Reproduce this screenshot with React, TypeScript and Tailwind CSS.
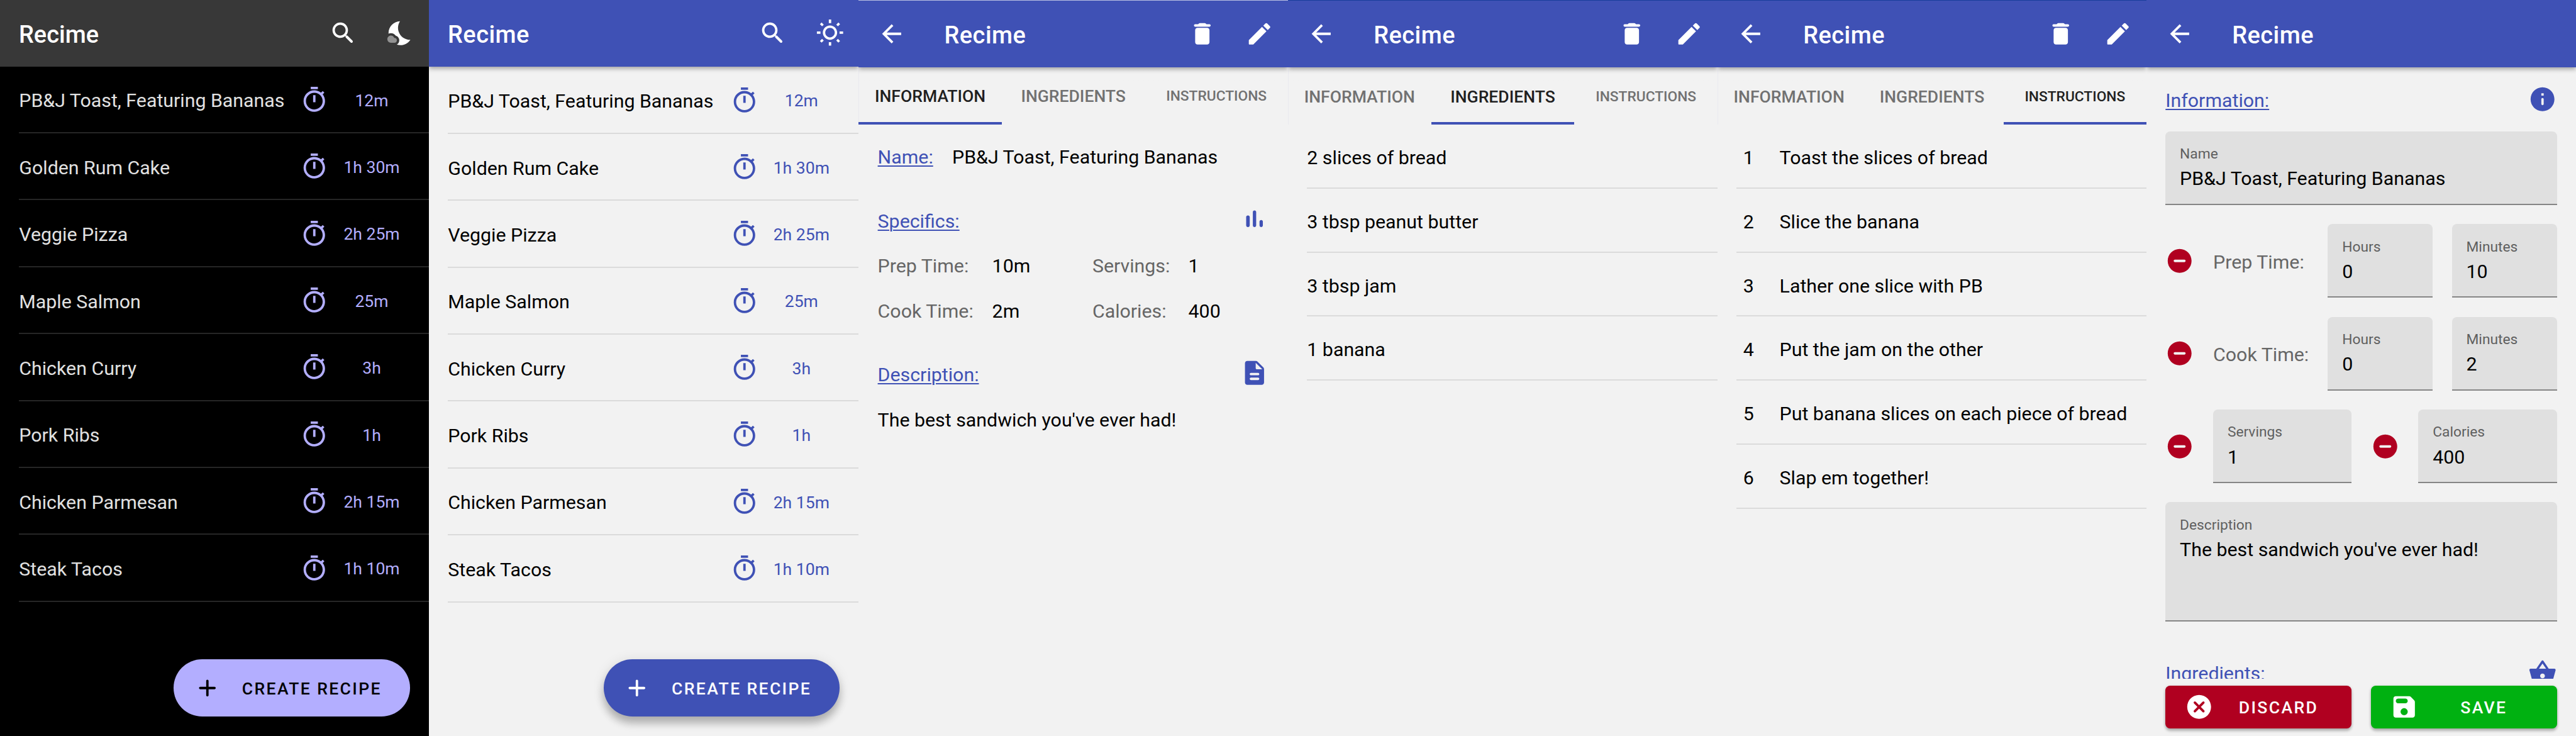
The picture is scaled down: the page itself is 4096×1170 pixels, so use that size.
import React from "react";

const ICONS = {
  search:
    "M15.5 14h-.79l-.28-.27c1.2-1.4 1.82-3.31 1.48-5.34-.47-2.78-2.79-5-5.59-5.34-4.23-.52-7.79 3.04-7.27 7.27.34 2.8 2.56 5.12 5.34 5.59 2.03.34 3.94-.28 5.34-1.48l.27.28v.79l4.25 4.25c.41.41 1.08.41 1.49 0 .41-.41.41-1.08 0-1.49L15.5 14zm-6 0C7.01 14 5 11.99 5 9.5S7.01 5 9.5 5 14 7.01 14 9.5 11.99 14 9.5 14z",
  sun: "M6.76 4.84l-1.8-1.79-1.41 1.41 1.79 1.79 1.42-1.41zM4 10.5H1v2h3v-2zm9-9.95h-2V3.5h2V.55zm7.45 3.91l-1.41-1.41-1.79 1.79 1.41 1.41 1.79-1.79zm-3.21 13.7l1.79 1.8 1.41-1.41-1.8-1.79-1.4 1.4zM20 10.5v2h3v-2h-3zm-8-5c-3.31 0-6 2.69-6 6s2.69 6 6 6 6-2.69 6-6-2.69-6-6-6zm0 10c-2.21 0-4-1.79-4-4s1.79-4 4-4 4 1.79 4 4-1.79 4-4 4zm-1 6.95h2V19.5h-2v2.95zm-7.45-3.91l1.41 1.41 1.79-1.8-1.41-1.41-1.79 1.8z",
  timer:
    "M15 1H9v2h6V1zm-4 13h2V8h-2v6zm8.03-6.61l1.42-1.42c-.43-.51-.9-.99-1.41-1.41l-1.42 1.42C16.07 4.74 14.12 4 12 4c-4.97 0-9 4.03-9 9s4.02 9 9 9 9-4.03 9-9c0-2.12-.74-4.07-1.97-5.61zM12 20c-3.87 0-7-3.13-7-7s3.13-7 7-7 7 3.13 7 7-3.13 7-7 7z",
  add: "M18 13h-5v5c0 .55-.45 1-1 1s-1-.45-1-1v-5H6c-.55 0-1-.45-1-1s.45-1 1-1h5V6c0-.55.45-1 1-1s1 .45 1 1v5h5c.55 0 1 .45 1 1s-.45 1-1 1z",
  back: "M20 11H7.83l5.59-5.59L12 4l-8 8 8 8 1.41-1.41L7.83 13H20v-2z",
  trash:
    "M6 19c0 1.1.9 2 2 2h8c1.1 0 2-.9 2-2V9c0-1.1-.9-2-2-2H8c-1.1 0-2 .9-2 2v10zM18 4h-2.5l-.71-.71c-.18-.18-.44-.29-.7-.29H9.91c-.26 0-.52.11-.7.29L8.5 4H6c-.55 0-1 .45-1 1s.45 1 1 1h12c.55 0 1-.45 1-1s-.45-1-1-1z",
  edit: "M3 17.46v3.04c0 .28.22.5.5.5h3.04c.13 0 .26-.05.35-.15L17.81 9.94l-3.75-3.75L3.15 17.1c-.1.1-.15.22-.15.36zM20.71 7.04c.39-.39.39-1.02 0-1.41l-2.34-2.34c-.39-.39-1.02-.39-1.41 0l-1.83 1.83 3.75 3.75 1.83-1.83z",
  chart:
    "M6.4 9.2h.2c.77 0 1.4.63 1.4 1.4v7c0 .77-.63 1.4-1.4 1.4h-.2c-.77 0-1.4-.63-1.4-1.4v-7c0-.77.63-1.4 1.4-1.4zM12 5c.77 0 1.4.63 1.4 1.4v11.2c0 .77-.63 1.4-1.4 1.4-.77 0-1.4-.63-1.4-1.4V6.4c0-.77.63-1.4 1.4-1.4zm5.6 8c.77 0 1.4.63 1.4 1.4v3.2c0 .77-.63 1.4-1.4 1.4-.77 0-1.4-.63-1.4-1.4v-3.2c0-.77.63-1.4 1.4-1.4z",
  document:
    "M14.59 2.59c-.38-.38-.89-.59-1.42-.59H6c-1.1 0-2 .9-2 2v16c0 1.1.89 2 1.99 2H18c1.1 0 2-.9 2-2V8.83c0-.53-.21-1.04-.59-1.41l-4.82-4.83zM15 18H9c-.55 0-1-.45-1-1s.45-1 1-1h6c.55 0 1 .45 1 1s-.45 1-1 1zm0-4H9c-.55 0-1-.45-1-1s.45-1 1-1h6c.55 0 1 .45 1 1s-.45 1-1 1zm-2-6V3.5L18.5 9H14c-.55 0-1-.45-1-1z",
  info: "M12 2C6.48 2 2 6.48 2 12s4.48 10 10 10 10-4.48 10-10S17.52 2 12 2zm0 15c-.55 0-1-.45-1-1v-4c0-.55.45-1 1-1s1 .45 1 1v4c0 .55-.45 1-1 1zm1-8h-2V7h2v2z",
  remove:
    "M12 2C6.48 2 2 6.48 2 12s4.48 10 10 10 10-4.48 10-10S17.52 2 12 2zm4 11H8c-.55 0-1-.45-1-1s.45-1 1-1h8c.55 0 1 .45 1 1s-.45 1-1 1z",
  basket:
    "M17.21 9l-4.38-6.56c-.19-.28-.51-.42-.83-.42-.32 0-.64.14-.83.43L6.79 9H2c-.55 0-1 .45-1 1 0 .09.01.18.04.27l2.54 9.27c.23.84 1 1.46 1.92 1.46h13c.92 0 1.69-.62 1.93-1.46l2.54-9.27L23 10c0-.55-.45-1-1-1h-4.79zM9 9l3-4.4L15 9H9zm3 8c-1.1 0-2-.9-2-2s.9-2 2-2 2 .9 2 2-.9 2-2 2z",
  cancel:
    "M12 2C6.47 2 2 6.47 2 12s4.47 10 10 10 10-4.47 10-10S17.53 2 12 2zm4.3 14.3c-.39.39-1.02.39-1.41 0L12 13.41 9.11 16.3c-.39.39-1.02.39-1.41 0-.39-.39-.39-1.02 0-1.41L10.59 12 7.7 9.11c-.39-.39-.39-1.02 0-1.41.39-.39 1.02-.39 1.41 0L12 10.59l2.89-2.89c.39-.39 1.02-.39 1.41 0 .39.39.39 1.02 0 1.41L13.41 12l2.89 2.89c.38.38.38 1.02 0 1.41z",
  save: "M17.59 3.59c-.38-.38-.89-.59-1.42-.59H5c-1.11 0-2 .9-2 2v14c0 1.1.9 2 2 2h14c1.1 0 2-.9 2-2V7.83c0-.53-.21-1.04-.59-1.41l-2.82-2.83zM12 19c-1.66 0-3-1.34-3-3s1.34-3 3-3 3 1.34 3 3-1.34 3-3 3zm1-10H7c-1.1 0-2-.9-2-2s.9-2 2-2h6c1.1 0 2 .9 2 2s-.9 2-2 2z",
};

type IconName = keyof typeof ICONS;

function Icon({ name, className = "" }: { name: IconName; className?: string }) {
  return (
    <svg viewBox="0 0 24 24" fill="currentColor" className={`size-[45.5px] shrink-0 ${className}`}>
      <path d={ICONS[name]} />
    </svg>
  );
}

function MoonIcon() {
  return (
    <svg viewBox="0 0 24 24" fill="currentColor" className="size-[45.5px] shrink-0">
      <path d="M11.1 12.08c-2.33-4.51-.5-8.48.53-10.07C6.27 2.2 1.98 6.59 1.98 12c0 .14.02.28.02.42.62-.27 1.29-.42 2-.42 1.66 0 3.18.83 4.1 2.15 1.67.48 2.9 2.02 2.9 3.85 0 1.52-.87 2.83-2.12 3.51.98.32 2.03.5 3.11.5 3.5 0 6.58-1.8 8.37-4.52-2.36.23-6.98-.97-9.26-5.41z" />
      <path fillOpacity=".45" d="M7 16h-.18C6.4 14.84 5.3 14 4 14c-1.66 0-3 1.34-3 3s1.34 3 3 3h3c1.1 0 2-.9 2-2s-.9-2-2-2z" />
    </svg>
  );
}

/* Body text: 16sp with the platform's extra top font padding. */
const BODY = "pt-[3px] text-[30.34px] leading-[37.3px] whitespace-nowrap";

function AppBar({
  back = false,
  dark = false,
  actions,
  className,
}: {
  back?: boolean;
  dark?: boolean;
  actions?: React.ReactNode;
  className: string;
}) {
  return (
    <header
      className={`relative z-10 flex shrink-0 items-center pl-[30px] pr-[22.8px] text-white ${className} ${
        dark ? "bg-[#383838]" : "bg-[#3f51b5] shadow-[0_3px_7px_rgba(0,0,0,0.34)]"
      }`}
    >
      {back && <Icon name="back" className="mr-[60.7px]" />}
      <h1
        className={`flex-1 pt-[4px] text-[37.93px] font-medium leading-[46px] ${dark ? "" : "tracking-[0.0125em]"}`}
      >
        Recime
      </h1>
      <div className="flex items-center gap-[45.5px]">{actions}</div>
    </header>
  );
}

const RECIPES: [string, string][] = [
  ["PB&J Toast, Featuring Bananas", "12m"],
  ["Golden Rum Cake", "1h 30m"],
  ["Veggie Pizza", "2h 25m"],
  ["Maple Salmon", "25m"],
  ["Chicken Curry", "3h"],
  ["Pork Ribs", "1h"],
  ["Chicken Parmesan", "2h 15m"],
  ["Steak Tacos", "1h 10m"],
];

function RecipeListScreen({ dark = false }: { dark?: boolean }) {
  return (
    <section className={`relative flex flex-col overflow-hidden ${dark ? "bg-black" : "bg-[#f2f2f2]"}`}>
      <AppBar
        dark={dark}
        className={dark ? "h-[105.7px]" : "h-[106.4px]"}
        actions={
          <>
            <Icon name="search" />
            {dark ? <MoonIcon /> : <Icon name="sun" />}
          </>
        }
      />
      <ul>
        {RECIPES.map(([name, time]) => (
          <li
            key={name}
            className={`ml-[30.3px] flex h-[106.4px] items-center border-b-2 pt-[1.4px] ${
              dark ? "border-[#262626] text-[#e1e1e1]" : "border-[#dbdbdb] text-black"
            }`}
          >
            <span className={`flex-1 ${BODY}`}>{name}</span>
            <Icon name="timer" className={dark ? "text-[#b3aeff]" : "text-[#3f51b5]"} />
            <span
              className={`ml-[7.6px] mr-[30.3px] w-[121.4px] pt-[2px] text-center text-[26.55px] leading-[32px] ${
                dark ? "text-[#b3aeff]" : "text-[#3f51b5]"
              }`}
            >
              {time}
            </span>
          </li>
        ))}
      </ul>
      <button
        className={`absolute bottom-[31px] right-[30.3px] flex h-[91px] w-[375.5px] items-center rounded-full pl-[30.3px] ${
          dark
            ? "bg-[#b3aeff] text-black"
            : "bg-[#3f51b5] text-white shadow-[0_11px_13px_rgba(0,0,0,0.24),0_2px_20px_rgba(0,0,0,0.1)]"
        }`}
      >
        <Icon name="add" />
        <span className="ml-[32.8px] whitespace-nowrap pt-[2px] text-[26.55px] font-medium leading-[32px] tracking-[0.0893em]">
          CREATE RECIPE
        </span>
      </button>
    </section>
  );
}

const TABS = ["INFORMATION", "INGREDIENTS", "INSTRUCTIONS"];

function DetailScreen({
  active,
  barClass,
  children,
}: {
  active: number;
  barClass: string;
  children: React.ReactNode;
}) {
  return (
    <section className="flex flex-col overflow-hidden bg-[#f2f2f2] text-black">
      <AppBar
        back
        className={`border-t ${barClass}`}
        actions={
          <>
            <Icon name="trash" />
            <Icon name="edit" />
          </>
        }
      />
      <nav className="grid h-[91px] shrink-0 grid-cols-3 bg-linear-to-r from-[#e9e9ef] from-[1px] to-[#f2f2f2] to-[1px]">
        {TABS.map((tab, i) => (
          <div
            key={tab}
            className={`flex items-center justify-center border-b-4 pt-[6px] font-medium leading-[32px] ${
              i === 2 ? "text-[22.76px]" : "text-[26.55px]"
            } ${i === active ? "border-[#3f51b5] text-[#1f1f1f]" : "border-transparent text-[#717171]"}`}
          >
            {tab}
          </div>
        ))}
      </nav>
      {children}
    </section>
  );
}

function Heading({ children, icon, iconClass = "" }: { children: string; icon?: IconName; iconClass?: string }) {
  return (
    <div className="flex h-[40.3px] items-center justify-between text-[#3f51b5]">
      <h2 className={`underline decoration-2 underline-offset-[3px] ${BODY}`}>{children}</h2>
      {icon && <Icon name={icon} className={iconClass} />}
    </div>
  );
}

function Specific({ label, value, className }: { label: string; value: string; className: string }) {
  return (
    <div className={`flex ${BODY}`}>
      <dt className={`text-[#666] ${className}`}>{label}</dt>
      <dd>{value}</dd>
    </div>
  );
}

function InformationTab() {
  return (
    <div className="flex flex-col px-[30.3px] pt-[30.6px]">
      <div className="flex h-[40.3px] gap-[30.3px]">
        <Heading>Name:</Heading>
        <span className={BODY}>PB&amp;J Toast, Featuring Bananas</span>
      </div>
      <div className="mt-[61.4px]">
        <Heading icon="chart" iconClass="-mt-[4px]">
          Specifics:
        </Heading>
      </div>
      <dl className="mt-[31.2px] grid grid-cols-[341.3px_1fr] gap-y-[31.2px]">
        <Specific label="Prep Time:" value="10m" className="w-[182px]" />
        <Specific label="Servings:" value="1" className="w-[152.7px]" />
        <Specific label="Cook Time:" value="2m" className="w-[182px]" />
        <Specific label="Calories:" value="400" className="w-[152.7px]" />
      </dl>
      <div className="mt-[61.4px]">
        <Heading icon="document" iconClass="-mt-[4px]">
          Description:
        </Heading>
      </div>
      <p className={`mt-[31.2px] ${BODY}`}>The best sandwich you've ever had!</p>
    </div>
  );
}

const INGREDIENTS = ["2 slices of bread", "3 tbsp peanut butter", "3 tbsp jam", "1 banana"];

const STEPS = [
  "Toast the slices of bread",
  "Slice the banana",
  "Lather one slice with PB",
  "Put the jam on the other",
  "Put banana slices on each piece of bread",
  "Slap em together!",
];

const ROW = "ml-[30.3px] flex h-[101.8px] items-center border-b-2 border-[#dbdbdb] pt-[2.6px]";

function Field({ label, value, className = "h-[117px]" }: { label: string; value: string; className?: string }) {
  return (
    <div
      className={`min-w-0 rounded-t-[7.6px] border-b-2 border-[#858585] bg-[#e0e0e0] pl-[22.8px] pt-[22.4px] ${className}`}
    >
      <div className="text-[22.76px] leading-[28px] text-[#5f5f5f]">{label}</div>
      <div className="mt-[6.2px] whitespace-nowrap text-[30.34px] leading-[37.3px] text-black">{value}</div>
    </div>
  );
}

function TimeRow({ label, hours, minutes }: { label: string; hours: string; minutes: string }) {
  return (
    <div className="flex items-center">
      <Icon name="remove" className="text-[#b00020]" />
      <span className={`ml-[30.3px] flex-1 text-[#666] ${BODY}`}>{label}</span>
      <Field label="Hours" value={hours} className="h-[117px] w-[167px]" />
      <Field label="Minutes" value={minutes} className="ml-[30.3px] h-[117px] w-[167px]" />
    </div>
  );
}

function ActionButton({ label, icon, className }: { label: string; icon: IconName; className: string }) {
  return (
    <button
      className={`flex h-[68.3px] flex-1 items-center rounded-[7.6px] pl-[30.3px] pr-[28.4px] text-white shadow-[0_4px_4px_rgba(0,0,0,0.22),0_1px_5px_rgba(0,0,0,0.15)] ${className}`}
    >
      <Icon name={icon} />
      <span className="ml-[16px] flex-1 pt-[2px] text-center text-[26.55px] font-medium leading-[32px] tracking-[0.0893em]">
        {label}
      </span>
    </button>
  );
}

function EditScreen() {
  return (
    <section className="flex flex-col overflow-hidden bg-[#f2f2f2] text-black">
      <AppBar back className="h-[107px]" />
      <div className="flex h-[971.8px] shrink-0 flex-col overflow-hidden px-[30.3px] pt-[31px]">
        <Heading icon="info">Information:</Heading>
        <div className="mt-[30.6px] flex flex-col gap-[30.4px]">
          <Field label="Name" value="PB&amp;J Toast, Featuring Bananas" />
          <TimeRow label="Prep Time:" hours="0" minutes="10" />
          <TimeRow label="Cook Time:" hours="0" minutes="2" />
          <div className="flex items-center gap-[30.3px]">
            <Icon name="remove" className="text-[#b00020]" />
            <Field label="Servings" value="1" className="h-[117px] flex-1" />
            <Icon name="remove" className="text-[#b00020]" />
            <Field label="Calories" value="400" className="h-[117px] flex-1" />
          </div>
          <Field label="Description" value="The best sandwich you've ever had!" className="h-[189.2px]" />
        </div>
        <div className="mt-[61px]">
          <Heading icon="basket">Ingredients:</Heading>
        </div>
      </div>
      <div className="mt-[11.2px] flex gap-[30.3px] px-[30.3px]">
        <ActionButton label="DISCARD" icon="cancel" className="bg-[#b00020]" />
        <ActionButton label="SAVE" icon="save" className="bg-[#00b111]" />
      </div>
    </section>
  );
}

export default function App() {
  return (
    <main className="grid h-[1170px] w-[4096px] grid-cols-[682px_683.3px_682.7px_683px_682px_1fr] overflow-hidden bg-[#f2f2f2] font-['Roboto',sans-serif]">
      <RecipeListScreen dark />
      <RecipeListScreen />
      <DetailScreen active={0} barClass="h-[106.5px] border-[#b9c0e3]">
        <InformationTab />
      </DetailScreen>
      <DetailScreen active={1} barClass="h-[107px] border-[#183e9b]">
        <ul>
          {INGREDIENTS.map((item) => (
            <li key={item} className={ROW}>
              <span className={BODY}>{item}</span>
            </li>
          ))}
        </ul>
      </DetailScreen>
      <DetailScreen active={2} barClass="h-[107px] border-[#183e9b]">
        <ol>
          {STEPS.map((step, i) => (
            <li key={step} className={ROW}>
              <span className={`w-[38px] text-center ${BODY}`}>{i + 1}</span>
              <span className={`ml-[30.3px] ${BODY}`}>{step}</span>
            </li>
          ))}
        </ol>
      </DetailScreen>
      <EditScreen />
    </main>
  );
}
